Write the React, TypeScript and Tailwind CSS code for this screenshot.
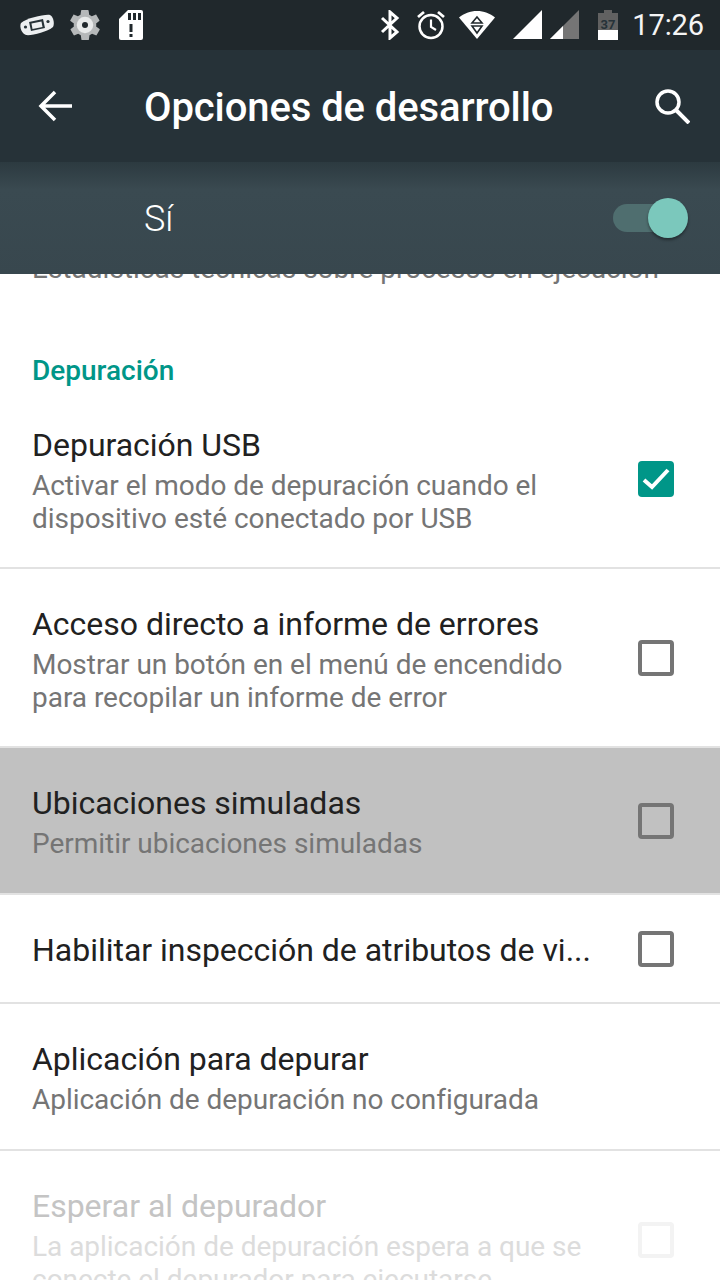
import React from "react";

const Box = ({ checked, faded }: { checked?: boolean; faded?: boolean }) => {
  if (checked) {
    return (
      <svg width="36" height="36" viewBox="0 0 36 36" className="shrink-0">
        <rect width="36" height="36" rx="4" fill="#009688" />
        <path d="M6 19l8 7L30 9" fill="none" stroke="#fff" strokeWidth="4" />
      </svg>
    );
  }
  return (
    <div
      className={`w-[36px] h-[36px] shrink-0 rounded-[4px] border-[4px] ${
        faded ? "border-[#f3f3f3]" : "border-[#757575]"
      }`}
    />
  );
};

const Row = ({
  title,
  lines,
  checked,
  box,
  height,
  highlight,
  faded,
}: {
  title: string;
  lines?: string[];
  checked?: boolean;
  box?: boolean;
  height: string;
  highlight?: boolean;
  faded?: boolean;
}) => {
  return (
    <div
      className={`${height} shrink-0 flex items-center justify-between pl-[32px] pr-[46px] ${
        highlight ? "bg-[#c1c1c1]" : ""
      }`}
    >
      <div className="min-w-0 mt-[2px]">
        <div
          className={`text-[32px] leading-[40px] tracking-[-0.02px] whitespace-nowrap ${
            faded ? "text-[#c4c4c4]" : "text-[#212121]"
          }`}
        >
          {title}
        </div>
        {lines && (
          <div className="mt-[4px]">
            {lines.map((line) => (
              <div
                key={line}
                className={`text-[28px] leading-[33px] tracking-[-0.03px] whitespace-nowrap ${
                  faded ? "text-[#dcdcdc]" : "text-[#757575]"
                }`}
              >
                {line}
              </div>
            ))}
          </div>
        )}
      </div>
      {box && <Box checked={checked} faded={faded} />}
    </div>
  );
};

const Divider = () => <div className="h-[2px] shrink-0 bg-[#e2e2e2]" />;

const StatusIcons = () => (
  <div className="h-[50px] shrink-0 bg-[#20282c] flex items-center pl-[19px] pr-[16px]">
    <svg width="36" height="28" viewBox="0 0 36 28" className="mr-[12px]">
      <path d="M2 12C8 7 26 3 31 4c3 1 5 8 3 12-6 5-22 9-27 8-4-1-7-8-5-12z" fill="#eceff1" />
      <path d="M10 11l14-3 2 9-14 3z" fill="#263238" />
      <path d="M12.500 12.500l10-2 1 5.500-10 2z" fill="#eceff1" />
      <circle cx="6.500" cy="16" r="1.600" fill="#263238" />
      <circle cx="29" cy="10.500" r="1.600" fill="#263238" />
    </svg>
    <svg width="36" height="36" viewBox="0 0 24 24" className="mr-[16px]">
      <path
        fill="#b5b8b9"
        fillRule="evenodd"
        d="M19.400 13c.1-.3.1-.7.1-1s0-.7-.1-1l2.100-1.600c.2-.2.2-.4.1-.6l-2-3.500c-.1-.2-.4-.3-.6-.2l-2.500 1c-.5-.4-1.100-.7-1.700-1l-.4-2.700c0-.2-.2-.4-.5-.4h-4c-.3 0-.5.2-.5.4l-.4 2.700c-.6.3-1.200.6-1.700 1l-2.500-1c-.2-.1-.5 0-.6.2l-2 3.500c-.1.2-.1.4.1.6L4.600 11c-.1.3-.1.700-.1 1s0 .7.1 1l-2.100 1.600c-.2.2-.2.4-.1.6l2 3.500c.1.2.4.3.6.2l2.500-1c.5.4 1.100.7 1.700 1l.4 2.700c0 .2.2.4.5.4h4c.3 0 .5-.2.5-.4l.4-2.700c.6-.3 1.200-.6 1.700-1l2.500 1c.2.1.5 0 .6-.2l2-3.500c.1-.2.1-.4-.1-.6zM12 17a5 5 0 1 1 0-10 5 5 0 0 1 0 10z"
      />
      <circle cx="12" cy="12" r="5.500" fill="#e8eaea" />
      <circle cx="12" cy="12" r="2" fill="#20282c" />
    </svg>
    <svg width="24" height="30" viewBox="0 0 24 30">
      <path d="M9 0h13a2 2 0 0 1 2 2v26a2 2 0 0 1-2 2H2a2 2 0 0 1-2-2V9z" fill="#fff" />
      <path d="M9 3h3v7H9zM14 3h3v7h-3zM19 3h3v7h-3zM10.500 14h3v8h-3zM10.500 24h3v3h-3z" fill="#20282c" />
    </svg>
    <div className="flex-1" />
    <svg width="20" height="30" viewBox="0 0 20 30" className="mr-[16px]">
      <path d="M2 8l15 14-7 6V2l7 6L2 22" fill="none" stroke="#fff" strokeWidth="3" />
    </svg>
    <svg width="30" height="30" viewBox="0 0 30 30" className="mr-[13px]">
      <circle cx="15" cy="16.500" r="11.500" fill="none" stroke="#fff" strokeWidth="2.500" />
      <path d="M15 9.500v7.500l5 3" fill="none" stroke="#fff" strokeWidth="2.200" />
      <path d="M2 7l6-5M28 7l-6-5" stroke="#fff" strokeWidth="2.800" />
    </svg>
    <svg width="36" height="28" viewBox="0 0 36 28" className="mr-[18px]">
      <path d="M0 6.500C5 2.500 11 0 18 0s13 2.500 18 6.500L18 28z" fill="#fff" />
      <path d="M18 6l5 6H13zM18 22l5-7H13z" fill="none" stroke="#20282c" strokeWidth="1.600" />
    </svg>
    <svg width="30" height="30" viewBox="0 0 30 30" className="mr-[7px]">
      <path d="M0 29L29 0v29z" fill="#fff" />
    </svg>
    <svg width="30" height="30" viewBox="0 0 30 30" className="mr-[18px]">
      <path d="M0 29L29 0v29z" fill="#757575" />
      <path d="M0 29l13-13v13z" fill="#fff" />
    </svg>
    <svg width="20" height="30" viewBox="0 0 20 30" className="mr-[14px]">
      <path d="M6 0h8v3h6v17H0V3h6z" fill="#616161" />
      <path d="M0 20h20v10H0z" fill="#fff" />
      <text x="10" y="19" textAnchor="middle" fontSize="13" fontWeight="700" fill="#263238" fontFamily="Roboto">
        37
      </text>
    </svg>
    <span className="text-[29px] leading-none text-[#f5f5f5] tracking-[-0.1px] mt-[1px]">17:26</span>
  </div>
);

export default function App() {
  return (
    <div className="w-[720px] h-[1280px] overflow-hidden flex flex-col bg-white font-['Roboto',sans-serif]">
      <StatusIcons />
      <div className="h-[112px] shrink-0 bg-[#263238] flex items-center pl-[38px] pr-[30px]">
        <svg width="36" height="36" viewBox="0 0 36 36" className="mr-[70px]">
          <path d="M34 18H4M17 4L3 18l14 14" fill="none" stroke="#fff" strokeWidth="3.500" />
        </svg>
        <span className="text-[40px] font-medium text-white leading-none tracking-[-0.1px] flex-1 mt-[4px]">
          Opciones de desarrollo
        </span>
        <svg width="36" height="36" viewBox="0 0 36 36">
          <circle cx="14" cy="14" r="11" fill="none" stroke="#fff" strokeWidth="3.500" />
          <path d="M22 22l13 13" stroke="#fff" strokeWidth="4" />
        </svg>
      </div>
      <div className="h-[112px] shrink-0 bg-[#37474f] bg-gradient-to-b from-[#2c3a40] via-[#3a4a51] via-[25%] to-[#38474e] flex items-center justify-between pl-[144px] pr-[32px] z-10">
        <span className="text-[36px] text-white leading-none font-light mt-[2px]">Sí</span>
        <div className="relative w-[75px] h-[40px] flex items-center">
          <div className="w-[60px] h-[28px] rounded-full bg-[#4f6e6f]" />
          <div className="absolute right-0 top-0 w-[40px] h-[40px] rounded-full bg-[#7bc8bc] shadow-[0_2px_3px_rgba(0,0,0,0.4)]" />
        </div>
      </div>

      <div className="flex-1 overflow-hidden flex flex-col">
        <div className="h-[72px] shrink-0 pl-[32px] -mt-[22px] text-[28px] leading-[33px] tracking-[-0.01px] text-[#757575] whitespace-nowrap">
          Estadísticas técnicas sobre procesos en ejecución
        </div>
        <div className="h-[40px] shrink-0 pl-[32px] pt-[1px] mt-[26px] flex items-center text-[28px] font-medium text-[#009688]">
          Depuración
        </div>
        <Row
          height="h-[177px]"
          title="Depuración USB"
          lines={["Activar el modo de depuración cuando el", "dispositivo esté conectado por USB"]}
          box
          checked
        />
        <Divider />
        <Row
          height="h-[177px]"
          title="Acceso directo a informe de errores"
          lines={["Mostrar un botón en el menú de encendido", "para recopilar un informe de error"]}
          box
        />
        <Divider />
        <Row
          height="h-[145px]"
          title="Ubicaciones simuladas"
          lines={["Permitir ubicaciones simuladas"]}
          box
          highlight
        />
        <Divider />
        <Row height="h-[107px]" title="Habilitar inspección de atributos de vi..." box />
        <Divider />
        <Row
          height="h-[145px]"
          title="Aplicación para depurar"
          lines={["Aplicación de depuración no configurada"]}
        />
        <Divider />
        <Row
          height="h-[177px]"
          title="Esperar al depurador"
          lines={["La aplicación de depuración espera a que se", "conecte el depurador para ejecutarse"]}
          box
          faded
        />
      </div>
    </div>
  );
}
